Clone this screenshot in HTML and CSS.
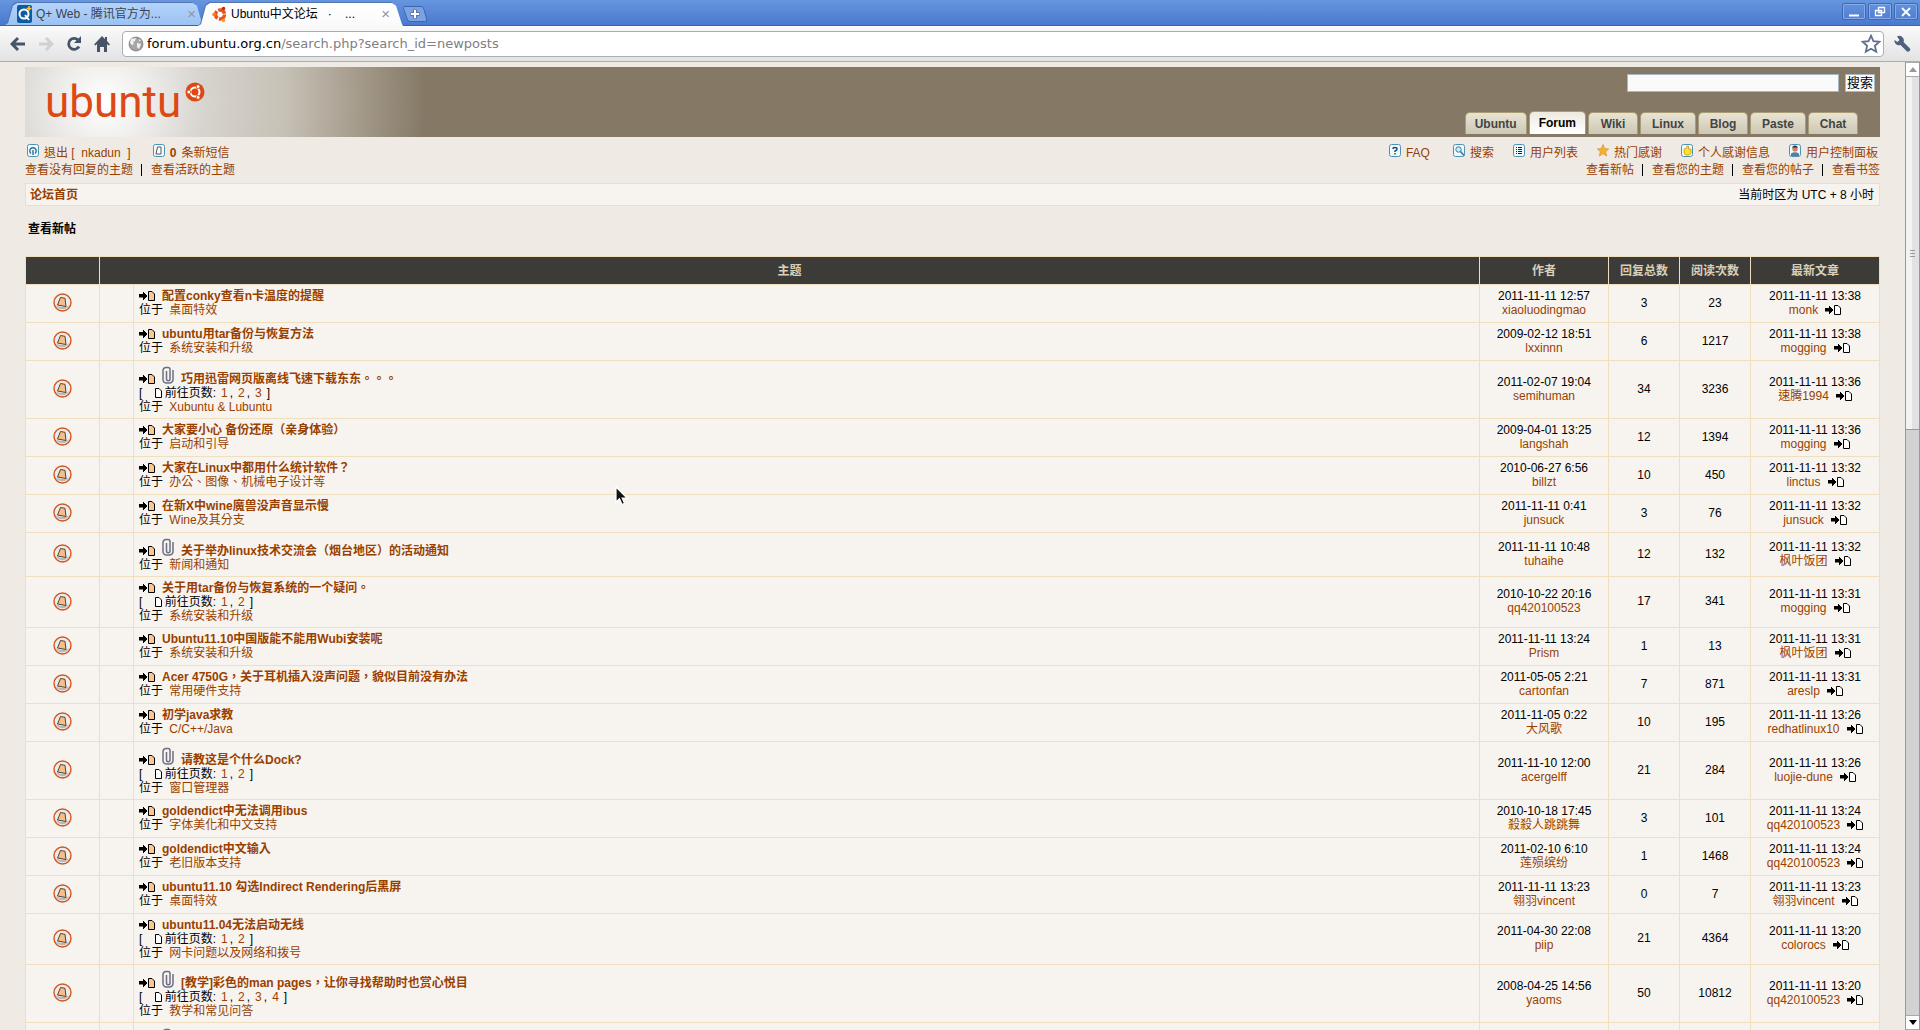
FILE: index.html
```
<!DOCTYPE html>
<html lang="zh-TW">
<head>
  <meta charset="UTF-8">
  <title>Ubuntu中文论坛 · 查看新帖</title>
  <link rel="stylesheet" href="styles.css">
</head>
<body>
  <!-- shared icons -->
  <svg class="sprite" width="0" height="0">
    <symbol id="i-goto" viewBox="0 0 16 10">
      <path d="M0 3h4V1h1v1h1v1h1v1h1v2H7v1H6v1H5v1H4V6.500H0z" fill="#000"/>
      <path d="M9.500.5h3.500l2.500 2.500v6.500h-6z" fill="#fbc894" stroke="#000"/>
    </symbol>
    <symbol id="i-last" viewBox="0 0 16 10">
      <path d="M0 3h4V1h1v1h1v1h1v1h1v2H7v1H6v1H5v1H4V6.500H0z" fill="#000"/>
      <path d="M9.500.5h3.500l2.500 2.500v6.500h-6z" fill="#fff" stroke="#000"/>
    </symbol>
    <symbol id="i-page" viewBox="0 0 8 10">
      <path d="M1.500.5h3.500l2.500 2.500v6.500h-6z" fill="#fff" stroke="#000"/>
    </symbol>
    <symbol id="i-clip" viewBox="0 0 12 18">
      <path d="M11 4v9.500a3.500 3.500 0 0 1-3.500 3.500h-3a3.500 3.500 0 0 1-3.500-3.500v-9a3 3 0 0 1 3-3h2a2 2 0 0 1 2 2v9.500a1.500 1.500 0 0 1-3.500 0V5" fill="none" stroke="#6d6e84" stroke-width="1.500"/>
    </symbol>
    <symbol id="i-topic" viewBox="0 0 19 19">
      <circle cx="9.500" cy="9.500" r="8.500" fill="#ececec" stroke="#d4561f" stroke-width="1.400"/>
      <path d="M3 12.500a7.500 7.500 0 0 0 13 0q-6 3-13 0z" fill="#b9b9b9"/>
      <path d="M7.500 4.500l4.500.8 1 8.200-8.500-1.500z" fill="#f9bd85" stroke="#4b4641"/>
    </symbol>
    <symbol id="i-box" viewBox="0 0 12 13">
      <rect x=".5" y=".5" width="11" height="12" rx="2" fill="#f2f9fd" stroke="#4d92b5"/>
    </symbol>
    <symbol id="i-friends" viewBox="0 0 20 20">
      <circle cx="10" cy="10" r="9.500" fill="#dd4814"/>
      <circle cx="10" cy="10" r="4.500" fill="none" stroke="#fff" stroke-width="2"/>
      <path d="M10 10L5 10M10 10l3-5M10 10l3 5" stroke="#dd4814" stroke-width="1"/>
      <g fill="#fff" stroke="#dd4814" stroke-width=".8">
        <circle cx="3.800" cy="10" r="1.900"/><circle cx="13.100" cy="4.600" r="1.900"/><circle cx="13.100" cy="15.400" r="1.900"/>
      </g>
    </symbol>
  </svg>

  <div class="tabstrip">
    <div class="tab">
      <svg width="15" height="18" viewBox="0 0 15 18"><rect width="15" height="18" rx="2" fill="#0d5ba5"/><circle cx="7" cy="9" r="4.500" fill="none" stroke="#fff" stroke-width="2"/><path d="M8 10l4 5" stroke="#fff" stroke-width="2"/><path d="M12 1v5M9.500 3.500h5" stroke="#fdc83c" stroke-width="1.500"/></svg>
      <span class="tab-title">Q+ Web - 腾讯官方为...</span>
      <button class="tab-close" aria-label="关闭">×</button>
    </div>
    <div class="tab active">
      <svg width="15" height="17" viewBox="0 0 15 17"><circle cx="8" cy="8.500" r="4.500" fill="none" stroke="#e9541d" stroke-width="3.500" stroke-dasharray="8 1.400"/><circle cx="2" cy="8.500" r="1.800" fill="#f5832a"/><circle cx="11.500" cy="2.500" r="1.800" fill="#c9240f"/><circle cx="11.500" cy="14.500" r="1.800" fill="#f9a11b"/></svg>
      <span class="tab-title">Ubuntu中文论坛&nbsp;&nbsp; ·&nbsp;&nbsp; &nbsp;...</span>
      <button class="tab-close" aria-label="关闭">×</button>
    </div>
    <button class="newtab" aria-label="新标签页">
      <svg width="24" height="16" viewBox="0 0 24 16"><path d="M1 .5h17q2 0 3 3l2.500 9q1 3-2 3H7q-2 0-3-3L.8 3.500Q0 .5 1 .5z" fill="#7ba3e2" stroke="#4064ae"/><path d="M12 3.500v9M7.500 8h9" stroke="#5876ad" stroke-width="4"/><path d="M12 4v8M8 8h8" stroke="#fff" stroke-width="2"/></svg>
    </button>
    <div class="winbuttons">
      <button aria-label="最小化"><svg width="14" height="12" viewBox="0 0 14 12"><path d="M2 9.500h10" stroke="#fff" stroke-width="2"/></svg></button>
      <button aria-label="还原"><svg width="14" height="12" viewBox="0 0 14 12"><path d="M5.500 1.500h6v5h-6zM2.500 4.500h6v5h-6z" fill="none" stroke="#fff" stroke-width="1.300"/></svg></button>
      <button aria-label="关闭"><svg width="14" height="12" viewBox="0 0 14 12"><path d="M3 2l8 8M11 2l-8 8" stroke="#fff" stroke-width="1.800"/></svg></button>
    </div>
  </div>

  <div class="toolbar">
    <button aria-label="后退"><svg width="16" height="16" viewBox="0 0 16 16"><path d="M8 2L2 8l6 6M2 8h13" fill="none" stroke="#465468" stroke-width="3"/></svg></button>
    <button aria-label="前进"><svg width="16" height="16" viewBox="0 0 16 16"><path d="M8 2l6 6-6 6M14 8H1" fill="none" stroke="#cfd1d5" stroke-width="3"/></svg></button>
    <button aria-label="刷新"><svg width="16" height="16" viewBox="0 0 16 16"><path d="M12.500 4.500A5.500 5.500 0 1 0 13 10.500" fill="none" stroke="#465468" stroke-width="2.800"/><path d="M15 0v7H8z" fill="#465468"/></svg></button>
    <button aria-label="主页"><svg width="16" height="16" viewBox="0 0 16 16"><path d="M8 0l3 3V1h2v4l3 3.500-1.500 1L13 8v8h-3v-5H6v5H3V8L1.500 9.500 0 8.500z" fill="#465468"/></svg></button>
    <div class="omnibox">
      <svg width="16" height="16" viewBox="0 0 16 16"><circle cx="8" cy="8" r="7.500" fill="#a6a6a6"/><circle cx="8" cy="8" r="6.500" fill="none" stroke="#8b8b8b"/><path d="M3 3l5-1-1 3-2 1 1 2-2 1-2-2zM9 7l4 1-2 5-2-2zM11 3l2 2h-2z" fill="#f2f2f2"/></svg>
      <span class="url">forum.ubuntu.org.cn<span>/search.php?search_id=newposts</span></span>
      <svg width="20" height="20" viewBox="0 0 18 18"><path d="M9 1.500l2.200 5 5.300.5-4 3.600 1.200 5.400L9 13.200 4.300 16l1.200-5.400-4-3.600 5.300-.5z" fill="#fff" stroke="#5f6f8c" stroke-width="1.600"/></svg>
    </div>
    <button aria-label="工具"><svg width="18" height="18" viewBox="0 0 18 18"><path d="M4 1.500a4.500 4.500 0 0 1 6.500 5.500l6 6a2 2 0 0 1-3 3l-6-6A4.500 4.500 0 0 1 1.500 5L4.500 7 6.500 5z" fill="#4f607c"/></svg></button>
  </div>

  <div class="viewport">
    <div class="page">
      <div class="header">
        <a class="logo" href="#"><span>ubuntu</span><svg width="20" height="20"><use href="#i-friends"/></svg></a>
        <form class="search">
          <input type="text" aria-label="搜索">
          <button type="button">搜索</button>
        </form>
        <nav class="sections">
          <a href="#">Ubuntu</a>
          <a href="#" class="current">Forum</a>
          <a href="#">Wiki</a>
          <a href="#">Linux</a>
          <a href="#">Blog</a>
          <a href="#">Paste</a>
          <a href="#">Chat</a>
        </nav>
      </div>

      <div class="menubar">
        <div class="menu">
          <div class="menu-row icons left">
            <a href="#"><svg width="12" height="13" viewBox="0 0 12 13"><use href="#i-box"/><path d="M4 9.500a3.200 3.200 0 1 1 4 0M6 6v5" fill="none" stroke="#2f6d92" stroke-width="1.400"/></svg>退出 [ &nbsp;nkadun&nbsp; ]</a>
            <a href="#"><svg width="12" height="13" viewBox="0 0 12 13"><use href="#i-box"/><path d="M4.500 3h3.500v7H3z" fill="#fff" stroke="#555"/></svg><strong>0</strong>条新短信</a>
          </div>
          <div class="menu-row links">
            <a href="#">查看没有回复的主题</a>
            <a href="#">查看活跃的主题</a>
          </div>
        </div>
        <div class="menu right">
          <div class="menu-row icons">
            <a href="#"><svg width="12" height="13" viewBox="0 0 12 13"><use href="#i-box"/><path d="M4 5q0-1.500 2-1.500t2 1.500T6 7v1M6 9v1.500" fill="none" stroke="#1d4d74" stroke-width="1.500"/></svg>FAQ</a>
            <a href="#"><svg width="12" height="13" viewBox="0 0 12 13"><use href="#i-box"/><circle cx="5.500" cy="5.500" r="2.700" fill="#cdeaf7" stroke="#3a7fa6"/><path d="M7.500 7.500l3.500 4" stroke="#3a7fa6" stroke-width="1.800"/></svg>搜索</a>
            <a href="#"><svg width="12" height="13" viewBox="0 0 12 13"><use href="#i-box"/><path d="M3 3.500h1m1 0h4M3 5.500h1m1 0h4M3 7.500h1m1 0h4M3 9.500h1m1 0h4" stroke="#222"/></svg>用户列表</a>
            <a href="#"><svg width="12" height="13" viewBox="0 0 12 13"><path d="M6 .5l1.700 4 4 .4-3 2.800 1 4.300L6 9.800 2.300 12l1-4.300-3-2.800 4-.4z" fill="#f6b12c" stroke="#d58a28" stroke-width=".6"/></svg>热门感谢</a>
            <a href="#"><svg width="12" height="13" viewBox="0 0 12 13"><use href="#i-box"/><path d="M3 5l2.500-.5L6 2h1.500v3H10v4.500L8 11H4.500L3 9z" fill="#ffe12e" stroke="#c99c10" stroke-width=".8"/></svg>个人感谢信息</a>
            <a href="#"><svg width="12" height="13" viewBox="0 0 12 13"><use href="#i-box"/><path d="M2 12V9.500q4-2.500 8 0V12z" fill="#5d7ba0"/><circle cx="6" cy="5" r="2.600" fill="#c9825d"/><path d="M3.200 4.500q0-3 2.800-3t2.800 3L8 3.500H4z" fill="#333"/></svg>用户控制面板</a>
          </div>
          <div class="menu-row links">
            <a href="#">查看新帖</a>
            <a href="#">查看您的主题</a>
            <a href="#">查看您的帖子</a>
            <a href="#">查看书签</a>
          </div>
        </div>
      </div>

      <div class="breadcrumb">
        <a href="#">论坛首页</a>
        <span>当前时区为 UTC + 8 小时</span>
      </div>

      <h2>查看新帖</h2>

      <table class="topics">
        <colgroup>
          <col class="c-icon"><col class="c-mark"><col><col class="c-author"><col class="c-num"><col class="c-num"><col class="c-author">
        </colgroup>
        <thead>
          <tr>
            <th></th>
            <th colspan="2">主题</th>
            <th>作者</th>
            <th>回复总数</th>
            <th>阅读次数</th>
            <th>最新文章</th>
          </tr>
        </thead>
        <tbody id="topics"></tbody>
      </table>
    </div>

    <div class="scrollbar">
      <div class="sb-button"><svg width="8" height="5"><path d="M4 0l4 5H0z" fill="#999"/></svg></div>
      <div class="sb-thumb"><i></i></div>
      <div class="sb-track"></div>
      <div class="sb-button"><svg width="8" height="5"><path d="M0 0h8L4 5z" fill="#000"/></svg></div>
    </div>
  </div>

  <svg class="pointer" width="14" height="20" viewBox="0 0 14 20"><path d="M1 1v15l3.500-3.200L7 18.500l2.500-1.200L7.200 12H12z" fill="#111" stroke="#fff" stroke-width="1.200"/></svg>

  <script src="script.js"></script>
</body>
</html>
```
FILE: styles.css
```
* {
  box-sizing: border-box;
}

body {
  margin: 0;
  height: 100vh;
  overflow: hidden;
  display: flex;
  flex-direction: column;
  font-family: "Liberation Sans", "Noto Sans CJK TC", sans-serif;
  font-size: 12px;
  line-height: 14px;
  color: #000;
  background: #efeae4;
}

a {
  color: #993f00;
  text-decoration: none;
}

button {
  font: inherit;
  padding: 0;
  border: none;
  background: none;
}

svg {
  flex: none;
}

.sprite {
  position: absolute;
}

/* browser frame */
.tabstrip {
  flex: none;
  display: flex;
  align-items: flex-end;
  height: 26px;
  padding-left: 4px;
  background: linear-gradient(#6596df, #4b78ce);
  border-bottom: 1px solid #3e62ad;
}

.tab {
  position: relative;
  z-index: 0;
  display: flex;
  align-items: center;
  width: 200px;
  height: 23px;
  margin-right: -7px;
  padding: 0 8px 0 13px;
  color: #3a4350;
}

.tab::before,
.tab::after {
  content: "";
  position: absolute;
  z-index: -2;
  inset: 0;
  background: #5476b2;
  clip-path: polygon(0 100%, 3px 92%, 8px 12%, 12px 0, 188px 0, 192px 12%, 197px 92%, 100% 100%);
}

.tab::after {
  z-index: -1;
  inset: 1px 1px 0;
  background: linear-gradient(#b3d3fb, #9cc2f3);
}

.tab.active {
  z-index: 1;
  width: 207px;
  height: 24px;
  margin-bottom: -1px;
  padding-left: 15px;
  padding-right: 14px;
  color: #000;
}

.tab.active::before,
.tab.active::after {
  clip-path: polygon(0 100%, 3px 92%, 8px 12%, 12px 0, 194px 0, 198px 12%, 204px 92%, 100% 100%);
}

.tab.active::after {
  background: linear-gradient(#fff, #fafafa);
}

.tab-title {
  flex: 1;
  margin-left: 4px;
  white-space: nowrap;
}

.tab-close {
  font-size: 15px;
  color: #8e959d;
}

.newtab {
  height: 20px;
  margin-left: 6px;
}

.winbuttons {
  display: flex;
  align-self: flex-start;
  gap: 2px;
  margin: 3px 2px 0 auto;
}

.winbuttons button {
  display: flex;
  align-items: center;
  justify-content: center;
  width: 24px;
  height: 17px;
  border: 1px solid #3f68b4;
  border-radius: 2px;
  box-shadow: inset 0 0 0 1px #86abe8;
}

.toolbar {
  flex: none;
  display: flex;
  align-items: center;
  gap: 12px;
  height: 36px;
  padding: 0 9px 0 10px;
  background: linear-gradient(#fafafa, #e3e3e4);
  border-bottom: 1px solid #a3aec0;
}

.toolbar button {
  display: flex;
}

.omnibox {
  flex: 1;
  display: flex;
  align-items: center;
  height: 26px;
  margin-right: -3px;
  padding: 0 2px 0 5px;
  background: #fff;
  border: 1px solid #a9aeb5;
  border-radius: 4px;
}

.url {
  flex: 1;
  margin-left: 3px;
  font-family: "DejaVu Sans", sans-serif;
  font-size: 13px;
}

.url span {
  color: #808080;
}

.viewport {
  flex: 1;
  display: flex;
  min-height: 0;
  overflow: hidden;
}

/* forum page */
.page {
  flex: 1;
  min-width: 0;
  padding: 5px 25px 0;
}

.header {
  display: grid;
  grid-template-columns: 1fr auto;
  align-content: space-between;
  height: 70px;
  padding: 7px 5px 3px 20px;
  background: radial-gradient(circle at 80px 35px, #fff 0, #eeedeb 45px, #d7d4ce 100px, #c7c1b6 180px, #a29888 260px, #857966 320px);
}

.logo {
  grid-row: 1 / 3;
  display: flex;
  align-items: flex-start;
  font-family: Roboto, sans-serif;
  font-size: 44px;
  line-height: 56px;
  color: #dd4814;
}

.logo svg {
  margin: 8px 0 0 4px;
}

.search {
  display: flex;
  justify-content: flex-end;
  gap: 6px;
}

.search input {
  width: 212px;
  height: 18px;
  padding: 1px 3px;
  background: #fafafa;
  border: 1px solid #a9b8c2;
}

.search button {
  width: 30px;
  height: 18px;
  background: #fafafa;
  border: 1px solid #a9b8c2;
  font-size: 13px;
}

.sections {
  display: flex;
  align-items: flex-end;
  gap: 2px;
  margin-right: 17px;
}

.sections a {
  min-width: 50px;
  height: 22px;
  padding: 0 9px;
  border: 1px solid #aa9b74;
  border-bottom: none;
  border-radius: 5px 5px 0 0;
  background: linear-gradient(#e8e4d4, #cdc7b4);
  color: #444;
  font-weight: bold;
  line-height: 22px;
  text-align: center;
}

.sections a:first-child {
  min-width: 62px;
}

.sections a:nth-child(2n):not(:last-child) {
  min-width: 56px;
}

.sections a.current {
  height: 23px;
  background: linear-gradient(#eeeae0, #fff);
  color: #000;
}

.menubar {
  display: flex;
  justify-content: space-between;
  padding-top: 7px;
}

.menu-row {
  display: flex;
  height: 17px;
  line-height: 18px;
}

.icons {
  gap: 19px;
  padding-right: 2px;
}

.icons.left {
  gap: 22px;
  padding-left: 2px;
}

.icons a {
  display: flex;
  gap: 5px;
}

.right .icons a:first-child {
  margin-right: 4px;
}

.links {
  height: 18px;
}

.links a + a::before {
  content: "";
  display: inline-block;
  width: 1px;
  height: 12px;
  margin: 0 9px 0 8px;
  background: #000;
  vertical-align: -2px;
}

.right .menu-row {
  justify-content: flex-end;
}

.breadcrumb {
  display: flex;
  justify-content: space-between;
  height: 23px;
  margin-top: 4px;
  padding: 0 5px 0 4px;
  background: #f7f4ef;
  border: 1px solid #efdfbf;
  line-height: 22px;
}

.breadcrumb a {
  font-weight: bold;
}

h2 {
  margin: 16px 3px 20px;
  font-size: 12px;
  line-height: 14px;
}

.topics {
  width: 100%;
  table-layout: fixed;
  border-collapse: collapse;
  background: #f7f4ef;
}

.c-icon {
  width: 74px;
}

.c-mark {
  width: 34px;
}

.c-author {
  width: 129px;
}

.c-num {
  width: 71px;
}

.topics th {
  height: 28px;
  padding: 0;
  background: #3c3b37;
  border: 1px solid #efdfbf;
  color: #d8d0b9;
}

.topics td {
  height: 38px;
  padding: 3px 5px 5px;
  border: 1px solid #efdfbf;
  text-align: center;
  white-space: nowrap;
}

.topics td.subject {
  padding: 4px 5px;
  text-align: left;
  vertical-align: top;
}

.topics td > svg {
  display: block;
  margin: 0 auto;
}

.title,
.pages,
.last {
  display: flex;
  align-items: center;
  height: 14px;
}

.title {
  gap: 7px;
  font-weight: bold;
}

.title.attached {
  align-items: flex-end;
  height: 21px;
}

.title.attached svg {
  margin-bottom: 2px;
}

.pages {
  gap: 5px;
}

.pages span {
  display: flex;
  align-items: center;
  gap: 3px;
}

.pages b {
  font-weight: normal;
  margin-left: -3px;
}

.forum a {
  margin-left: 3px;
}

.last {
  justify-content: center;
  gap: 7px;
}

/* scrollbar */
.scrollbar {
  flex: none;
  display: flex;
  flex-direction: column;
  width: 15px;
  border-left: 1px solid #999;
  border-right: 1px solid #999;
  background: #d2d2d2;
}

.sb-button {
  display: flex;
  align-items: center;
  justify-content: center;
  height: 15px;
  background: #fff;
  border: 1px solid #aaa;
  border-width: 1px 0;
}

.sb-thumb {
  flex: 353;
  display: flex;
  align-items: center;
  justify-content: center;
  background: linear-gradient(90deg, #f3f3f3 50%, #e2e2e2 50%);
  border-bottom: 1px solid #999;
}

.sb-thumb i {
  width: 5px;
  height: 7px;
  background: repeating-linear-gradient(#999 0 1px, transparent 1px 3px);
}

.sb-track {
  flex: 586;
}

.pointer {
  position: absolute;
  left: 615px;
  top: 486px;
}
```
FILE: script.js
```
// title, forum, pages, attachment, posted, author, replies, views, last post, last author
const topics = [
  ["配置conky查看n卡温度的提醒", "桌面特效", 0, false, "2011-11-11 12:57", "xiaoluodingmao", 3, 23, "13:38", "monk"],
  ["ubuntu用tar备份与恢复方法", "系统安装和升级", 0, false, "2009-02-12 18:51", "lxxinnn", 6, 1217, "13:38", "mogging"],
  ["巧用迅雷网页版离线飞速下载东东。。。", "Xubuntu & Lubuntu", 3, true, "2011-02-07 19:04", "semihuman", 34, 3236, "13:36", "速腾1994"],
  ["大家要小心 备份还原（亲身体验）", "启动和引导", 0, false, "2009-04-01 13:25", "langshah", 12, 1394, "13:36", "mogging"],
  ["大家在Linux中都用什么统计软件？", "办公、图像、机械电子设计等", 0, false, "2010-06-27 6:56", "billzt", 10, 450, "13:32", "linctus"],
  ["在新X中wine魔兽没声音显示慢", "Wine及其分支", 0, false, "2011-11-11 0:41", "junsuck", 3, 76, "13:32", "junsuck"],
  ["关于举办linux技术交流会（烟台地区）的活动通知", "新闻和通知", 0, true, "2011-11-11 10:48", "tuhaihe", 12, 132, "13:32", "枫叶饭团"],
  ["关于用tar备份与恢复系统的一个疑问。", "系统安装和升级", 2, false, "2010-10-22 20:16", "qq420100523", 17, 341, "13:31", "mogging"],
  ["Ubuntu11.10中国版能不能用Wubi安装呢", "系统安装和升级", 0, false, "2011-11-11 13:24", "Prism", 1, 13, "13:31", "枫叶饭团"],
  ["Acer 4750G，关于耳机插入没声问题，貌似目前没有办法", "常用硬件支持", 0, false, "2011-05-05 2:21", "cartonfan", 7, 871, "13:31", "areslp"],
  ["初学java求教", "C/C++/Java", 0, false, "2011-11-05 0:22", "大风歌", 10, 195, "13:26", "redhatlinux10"],
  ["请教这是个什么Dock?", "窗口管理器", 2, true, "2011-11-10 12:00", "acergelff", 21, 284, "13:26", "luojie-dune"],
  ["goldendict中无法调用ibus", "字体美化和中文支持", 0, false, "2010-10-18 17:45", "殺殺人跳跳舞", 3, 101, "13:24", "qq420100523"],
  ["goldendict中文输入", "老旧版本支持", 0, false, "2011-02-10 6:10", "莲殒缤纷", 1, 1468, "13:24", "qq420100523"],
  ["ubuntu11.10 勾选Indirect Rendering后黑屏", "桌面特效", 0, false, "2011-11-11 13:23", "翎羽vincent", 0, 7, "13:23", "翎羽vincent"],
  ["ubuntu11.04无法启动无线", "网卡问题以及网络和拨号", 2, false, "2011-04-30 22:08", "piip", 21, 4364, "13:20", "colorocs"],
  ["[教学]彩色的man pages，让你寻找帮助时也赏心悦目", "教学和常见问答", 4, true, "2008-04-25 14:56", "yaoms", 50, 10812, "13:20", "qq420100523"],
  ["", "", 0, true, "", "", "", "", "", ""]
];

function icon(name, w, h) {
  return `<svg width="${w}" height="${h}"><use href="#i-${name}"/></svg>`;
}

function pageLinks(count) {
  if (!count) return "";
  const links = [];
  for (let i = 1; i <= count; i++) links.push(`<a href="#">${i}</a>`);
  return `<div class="pages">[ <span>&nbsp;${icon("page", 8, 10)}前往页数:</span> ${links.join("<b>,</b>")} ]</div>`;
}

document.getElementById("topics").innerHTML = topics.map(t => {
  const [title, forum, pages, attached, posted, author, replies, views, lastTime, lastAuthor] = t;
  return `<tr>
    <td>${icon("topic", 19, 19)}</td>
    <td></td>
    <td class="subject">
      <div class="title${attached ? " attached" : ""}">${icon("goto", 16, 10)}${attached ? icon("clip", 12, 18) : ""}<a href="#">${title}</a></div>
      ${pageLinks(pages)}
      <div class="forum">${forum && "位于"} <a href="#">${forum.replace("&", "&amp;")}</a></div>
    </td>
    <td>${posted}<br><a href="#">${author}</a></td>
    <td>${replies}</td>
    <td>${views}</td>
    <td>${lastTime && "2011-11-11 " + lastTime}<div class="last"><a href="#">${lastAuthor}</a>${icon("last", 16, 10)}</div></td>
  </tr>`;
}).join("");
```
